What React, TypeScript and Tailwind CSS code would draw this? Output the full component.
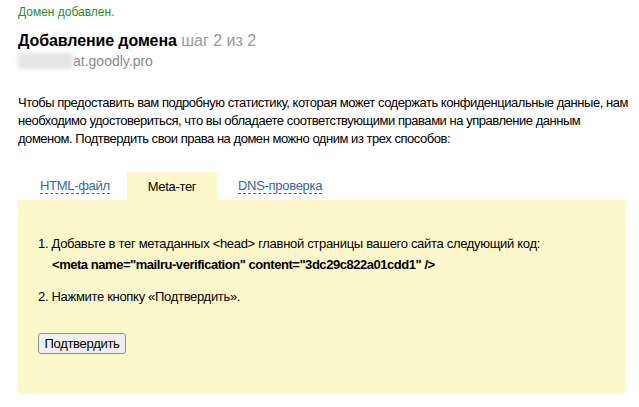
import React from "react";

export default function App() {
  return (
    <div className="min-h-[407px] w-[639px] bg-white pl-[18px] pt-1 text-black" style={{ fontFamily: '"Liberation Sans", Arial, sans-serif' }}>
      <div className="text-[12px] leading-[16px] text-[#2b8a2b]">Домен добавлен.</div>
      <div className="mt-[11px] text-[16px] leading-[20px]">
        <span className="font-bold tracking-[-0.1px]">Добавление домена</span>{" "}
        <span className="text-[#999999]">шаг 2 из 2</span>
      </div>
      <div className="mt-[1px] flex h-[18px] items-center text-[14px] leading-[18px] text-[#8a8a8a]">
        <div className="h-[16px] w-[55px] rounded-sm bg-[#e4e4e4] blur-[2px]" />
        <span>at.goodly.pro</span>
      </div>
      <p className="mt-[24px] w-[621px] whitespace-nowrap text-[13px] leading-[18px] tracking-[-0.47px]">
        Чтобы предоставить вам подробную статистику, которая может содержать конфиденциальные данные, нам
        <br />
        необходимо удостовериться, что вы обладаете соответствующими правами на управление данным
        <br />
        доменом. Подтвердить свои права на домен можно одним из трех способов:
      </p>
      <div className="mt-[24px] flex h-[28px] items-center text-[13px] tracking-[-0.3px]">
        <div className="flex h-full w-[109px] items-center pl-[22px]">
          <span className="border-b border-dashed border-[#3366aa] leading-[15px] text-[#3366aa]">HTML-файл</span>
        </div>
        <div className="flex h-full w-[90px] items-center justify-center bg-[#fdf8cb]">
          <span className="leading-[15px]">Meta-тег</span>
        </div>
        <div className="flex h-full items-center px-[21px]">
          <span className="border-b border-dashed border-[#3366aa] leading-[15px] text-[#3366aa]">DNS-проверка</span>
        </div>
      </div>
      <div className="h-[194px] w-[607px] bg-[#fdf8cb] pl-[20px] pt-[35px] text-[13px]">
        <div className="leading-[18px] tracking-[-0.31px]">1. Добавьте в тег метаданных &lt;head&gt; главной страницы вашего сайта следующий код:</div>
        <div className="mt-[3px] pl-[14px] font-bold leading-[18px] tracking-[-0.46px]">&lt;meta name="mailru-verification" content="3dc29c822a01cdd1" /&gt;</div>
        <div className="mt-[14px] leading-[18px] tracking-[-0.31px]">2. Нажмите кнопку «Подтвердить».</div>
        <button className="mt-[27px] flex h-[21px] w-[88px] items-center justify-center rounded-[3px] border border-[#8f8f8f] bg-[#efefef] text-[13px] leading-none tracking-[-0.3px] text-black">
          Подтвердить
        </button>
      </div>
    </div>
  );
}
